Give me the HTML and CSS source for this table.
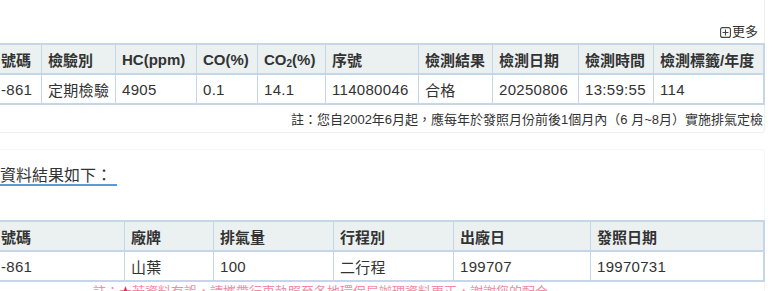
FILE: index.html
```html
<!DOCTYPE html>
<html lang="zh-Hant">
<head>
<meta charset="utf-8">
<title>排氣檢測資料</title>
<link rel="stylesheet" href="styles.css">
</head>
<body>
<div class="page">
  <section class="card card-top">
    <div class="more"><svg class="more-icon" width="11" height="11" viewBox="0 0 11 11"><rect x="0.6" y="0.6" width="9.8" height="9.8" rx="2" fill="none" stroke="#444" stroke-width="1.1"/><path d="M5.5 2.6v5.8M2.6 5.5h5.8" stroke="#444" stroke-width="1.1"/></svg>更多</div>
    <table class="grid grid-a">
      <colgroup>
        <col class="a1"><col class="a2"><col class="a3"><col class="a4"><col class="a5"><col class="a6"><col class="a7"><col class="a8"><col class="a9"><col class="a10">
      </colgroup>
      <thead>
        <tr><th class="first">號碼</th><th>檢驗別</th><th>HC(ppm)</th><th>CO(%)</th><th>CO<sub>2</sub>(%)</th><th>序號</th><th>檢測結果</th><th>檢測日期</th><th>檢測時間</th><th>檢測標籤/年度</th></tr>
      </thead>
      <tbody>
        <tr><td class="first">-861</td><td>定期檢驗</td><td>4905</td><td>0.1</td><td>14.1</td><td>114080046</td><td>合格</td><td>20250806</td><td>13:59:55</td><td>114</td></tr>
      </tbody>
    </table>
    <p class="note">註：您自2002年6月起，應每年於發照月份前後1個月內（6 月~8月）實施排氣定檢</p>
  </section>

  <section class="card card-bottom">
    <h2 class="title">資料結果如下：</h2>
    <table class="grid grid-b">
      <colgroup>
        <col class="b1"><col class="b2"><col class="b3"><col class="b4"><col class="b5"><col class="b6">
      </colgroup>
      <thead>
        <tr><th class="first">號碼</th><th>廠牌</th><th>排氣量</th><th>行程別</th><th>出廠日</th><th>發照日期</th></tr>
      </thead>
      <tbody>
        <tr><td class="first">-861</td><td>山葉</td><td>100</td><td>二行程</td><td>199707</td><td>19970731</td></tr>
      </tbody>
    </table>
    <p class="warn">註：<span class="star">★</span>若資料有誤，請攜帶行車執照至各地環保局辦理資料更正，謝謝您的配合</p>
  </section>
</div>
</body>
</html>
```

FILE: styles.css
```css
html, body {
  margin: 0;
  padding: 0;
  background: #fff;
  overflow: hidden;
}

body {
  font-family: "Liberation Sans", "Noto Sans CJK TC", sans-serif;
  color: #333;
}

.page {
  width: 766px;
  margin-left: -1px;
}

.card {
  border: 1px solid #efefef;
  border-left: none;
  border-radius: 0 4px 4px 0;
  padding-right: 1px;
}

.card-top {
  margin-top: -10px;
  padding-top: 32px;
  padding-bottom: 3px;
}

.more {
  display: flex;
  justify-content: flex-end;
  align-items: center;
  gap: 1px;
  font-size: 13px;
  line-height: 18px;
  padding-right: 5px;
  margin-bottom: 2px;
  color: #333;
}

.more-icon {
  display: block;
}

.grid {
  border-collapse: collapse;
  table-layout: fixed;
  width: 764px;
  font-size: 15px;
}

.grid th,
.grid td {
  border: 1px solid #c6d6e9;
  border-width: 2px 1px;
  height: 28px;
  padding: 0 6px;
  text-align: left;
  white-space: nowrap;
  overflow: hidden;
}

.grid th {
  background: #ebf0f1;
  font-weight: bold;
  color: #333;
}

.grid td {
  color: #333;
  letter-spacing: 0.3px;
}

.grid .first {
  padding-left: 1px;
  border-left-color: transparent;
}

.grid th:last-child,
.grid td:last-child {
  border-right-width: 2px;
}

.grid sub {
  font-size: 10px;
  vertical-align: -2px;
  line-height: 0;
}

.a1 { width: 42px; }
.a2 { width: 74px; }
.a3 { width: 81px; }
.a4 { width: 61px; }
.a5 { width: 68px; }
.a6 { width: 93px; }
.a7 { width: 74px; }
.a8 { width: 86px; }
.a9 { width: 75px; }
.a10 { width: 110px; }

.b1 { width: 125px; }
.b2 { width: 89px; }
.b3 { width: 120px; }
.b4 { width: 120px; }
.b5 { width: 137px; }
.b6 { width: 173px; }

.note {
  margin: 6px 0 0;
  font-size: 13px;
  line-height: 18px;
  text-align: right;
  color: #333;
}

.card-bottom {
  margin-top: 16px;
  padding-top: 17px;
  border-color: #f6f6f6;
}

.title {
  display: inline-block;
  margin: 0 0 34px 1px;
  padding-right: 5px;
  font-size: 16px;
  font-weight: normal;
  line-height: 16px;
  color: #333;
  border-bottom: 2px solid #5a9bd3;
}

.warn {
  margin: 1px 0 0 94px;
  font-size: 13px;
  line-height: 18px;
  color: #f58aa5;
}

.warn .star {
  color: #e8204f;
}
```
